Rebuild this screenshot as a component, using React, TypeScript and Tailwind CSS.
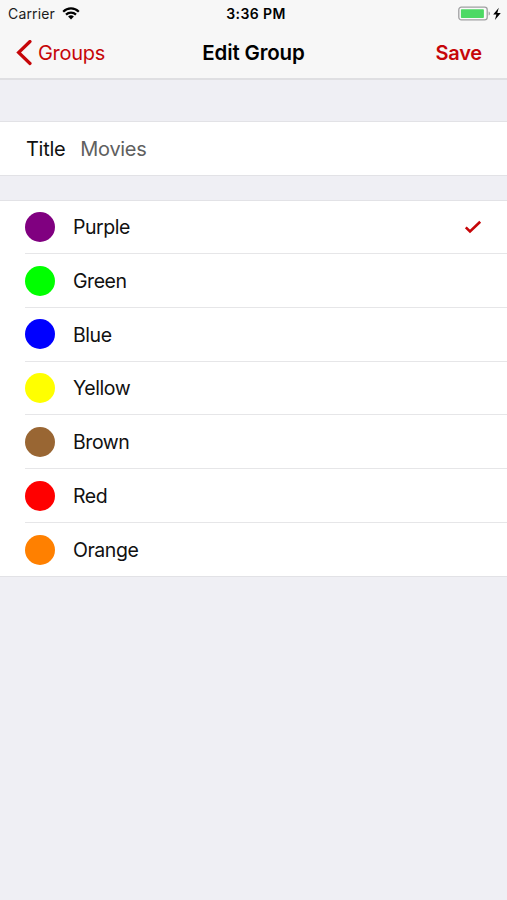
interface GroupColor {
  name: string;
  swatch: string;
}

const COLORS: GroupColor[] = [
  { name: 'Purple', swatch: 'bg-[#800080]' },
  { name: 'Green', swatch: 'bg-[#00ff00]' },
  { name: 'Blue', swatch: 'bg-[#0000ff]' },
  { name: 'Yellow', swatch: 'bg-[#ffff00]' },
  { name: 'Brown', swatch: 'bg-[#996633]' },
  { name: 'Red', swatch: 'bg-[#ff0000]' },
  { name: 'Orange', swatch: 'bg-[#ff8000]' },
];

function WifiIcon() {
  return (
    <svg width="18" height="13" viewBox="0 0 18 13" fill="none" stroke="#000" strokeWidth="2.2">
      <path d="M1.2 4.7a11 11 0 0 1 15.6 0" />
      <path d="M4 7.6a7.1 7.1 0 0 1 10 0" />
      <path d="M9 12.4 6.1 9.6a4.1 4.1 0 0 1 5.8 0z" fill="#000" stroke="none" />
    </svg>
  );
}

function BatteryIcon() {
  return (
    <svg width="44" height="16" viewBox="0 0 44 16">
      <rect x="0.8" y="1.1" width="28.4" height="12.8" rx="2.6" fill="#fafafa" stroke="#a0a0a2" strokeWidth="1.3" />
      <rect x="2.9" y="3.2" width="23" height="8.8" rx="0.8" fill="#4cd964" />
      <path d="M30.6 5.5c1.8.5 1.8 3.6 0 4.1z" fill="#a0a0a2" />
      <path d="M40.8 1.8 35.2 8.5h3.2l-1.5 5.6 5.9-7.2h-3.5z" fill="#000" />
    </svg>
  );
}

function StatusBar() {
  return (
    <div className="grid h-[27px] grid-cols-3 items-center px-[8px] text-black">
      <div className="flex items-center gap-[7px]">
        <span className="text-[14px] tracking-[0.15px] text-[#1c1c1c]">Carrier</span>
        <WifiIcon />
      </div>
      <span className="pl-[5px] text-center text-[14px] font-semibold tracking-[0.4px]">3:36 PM</span>
      <div className="-mr-[3px] flex justify-end">
        <BatteryIcon />
      </div>
    </div>
  );
}

function NavBar() {
  return (
    <div className="grid h-[51px] grid-cols-3 items-center px-[16px] text-[20px] text-[#c60609]">
      <button className="flex items-center gap-[6px]">
        <svg
          width="16"
          height="26"
          viewBox="0 0 16 26"
          fill="none"
          stroke="currentColor"
          strokeWidth="3.2"
          strokeLinecap="round"
        >
          <path d="M14 1.5 2.6 12.5 14 23.5" />
        </svg>
        <span className="tracking-[-0.3px]">Groups</span>
      </button>
      <h1 className="pt-[1.5px] text-center text-[20.5px] font-semibold tracking-[-0.15px] text-black">Edit Group</h1>
      <button className="pr-[9px] text-right font-semibold tracking-[-0.2px]">Save</button>
    </div>
  );
}

function ColorRow({ color, selected, last }: { color: GroupColor; selected: boolean; last: boolean }) {
  return (
    <li className="flex h-[53.75px] pl-[25px] first:h-[53px]">
      <div className={`flex flex-1 items-center pr-[25px] pt-[0.5px] ${last ? '' : 'border-b border-[#e6e6e8]'}`}>
        <span className={`size-[30px] rounded-full ${color.swatch}`} />
        <span className="ml-[18px] flex-1 pt-[1.5px] text-[19.5px] tracking-[-0.45px]">{color.name}</span>
        {selected && (
          <svg width="18" height="14" viewBox="0 0 18 14" fill="none" stroke="#c60609" strokeWidth="2.6">
            <path d="M1.8 7.4 6 11.5 16.2 1.8" />
          </svg>
        )}
      </div>
    </li>
  );
}

export default function App() {
  return (
    <div className="h-[900px] w-[507px] overflow-hidden bg-[#efeff4] font-[Inter,sans-serif] text-[#111]">
      <header className="h-[80px] border-b-2 border-[#dfdfe2] bg-[#f7f7f7]">
        <StatusBar />
        <NavBar />
      </header>

      <main>
        <label className="mt-[41px] flex h-[55px] items-center gap-[15px] border-y border-[#e2e2e6] bg-white pl-[26px] text-[20px] tracking-[-0.3px]">
          <span>Title</span>
          <input
            className="flex-1 bg-transparent text-[#606060] outline-none"
            defaultValue="Movies"
          />
        </label>

        <ul className="mt-[24px] h-[377px] border-y border-[#e2e2e6] bg-white">
          {COLORS.map((color, idx) => (
            <ColorRow
              key={color.name}
              color={color}
              selected={color.name === 'Purple'}
              last={idx === COLORS.length - 1}
            />
          ))}
        </ul>
      </main>
    </div>
  );
}
